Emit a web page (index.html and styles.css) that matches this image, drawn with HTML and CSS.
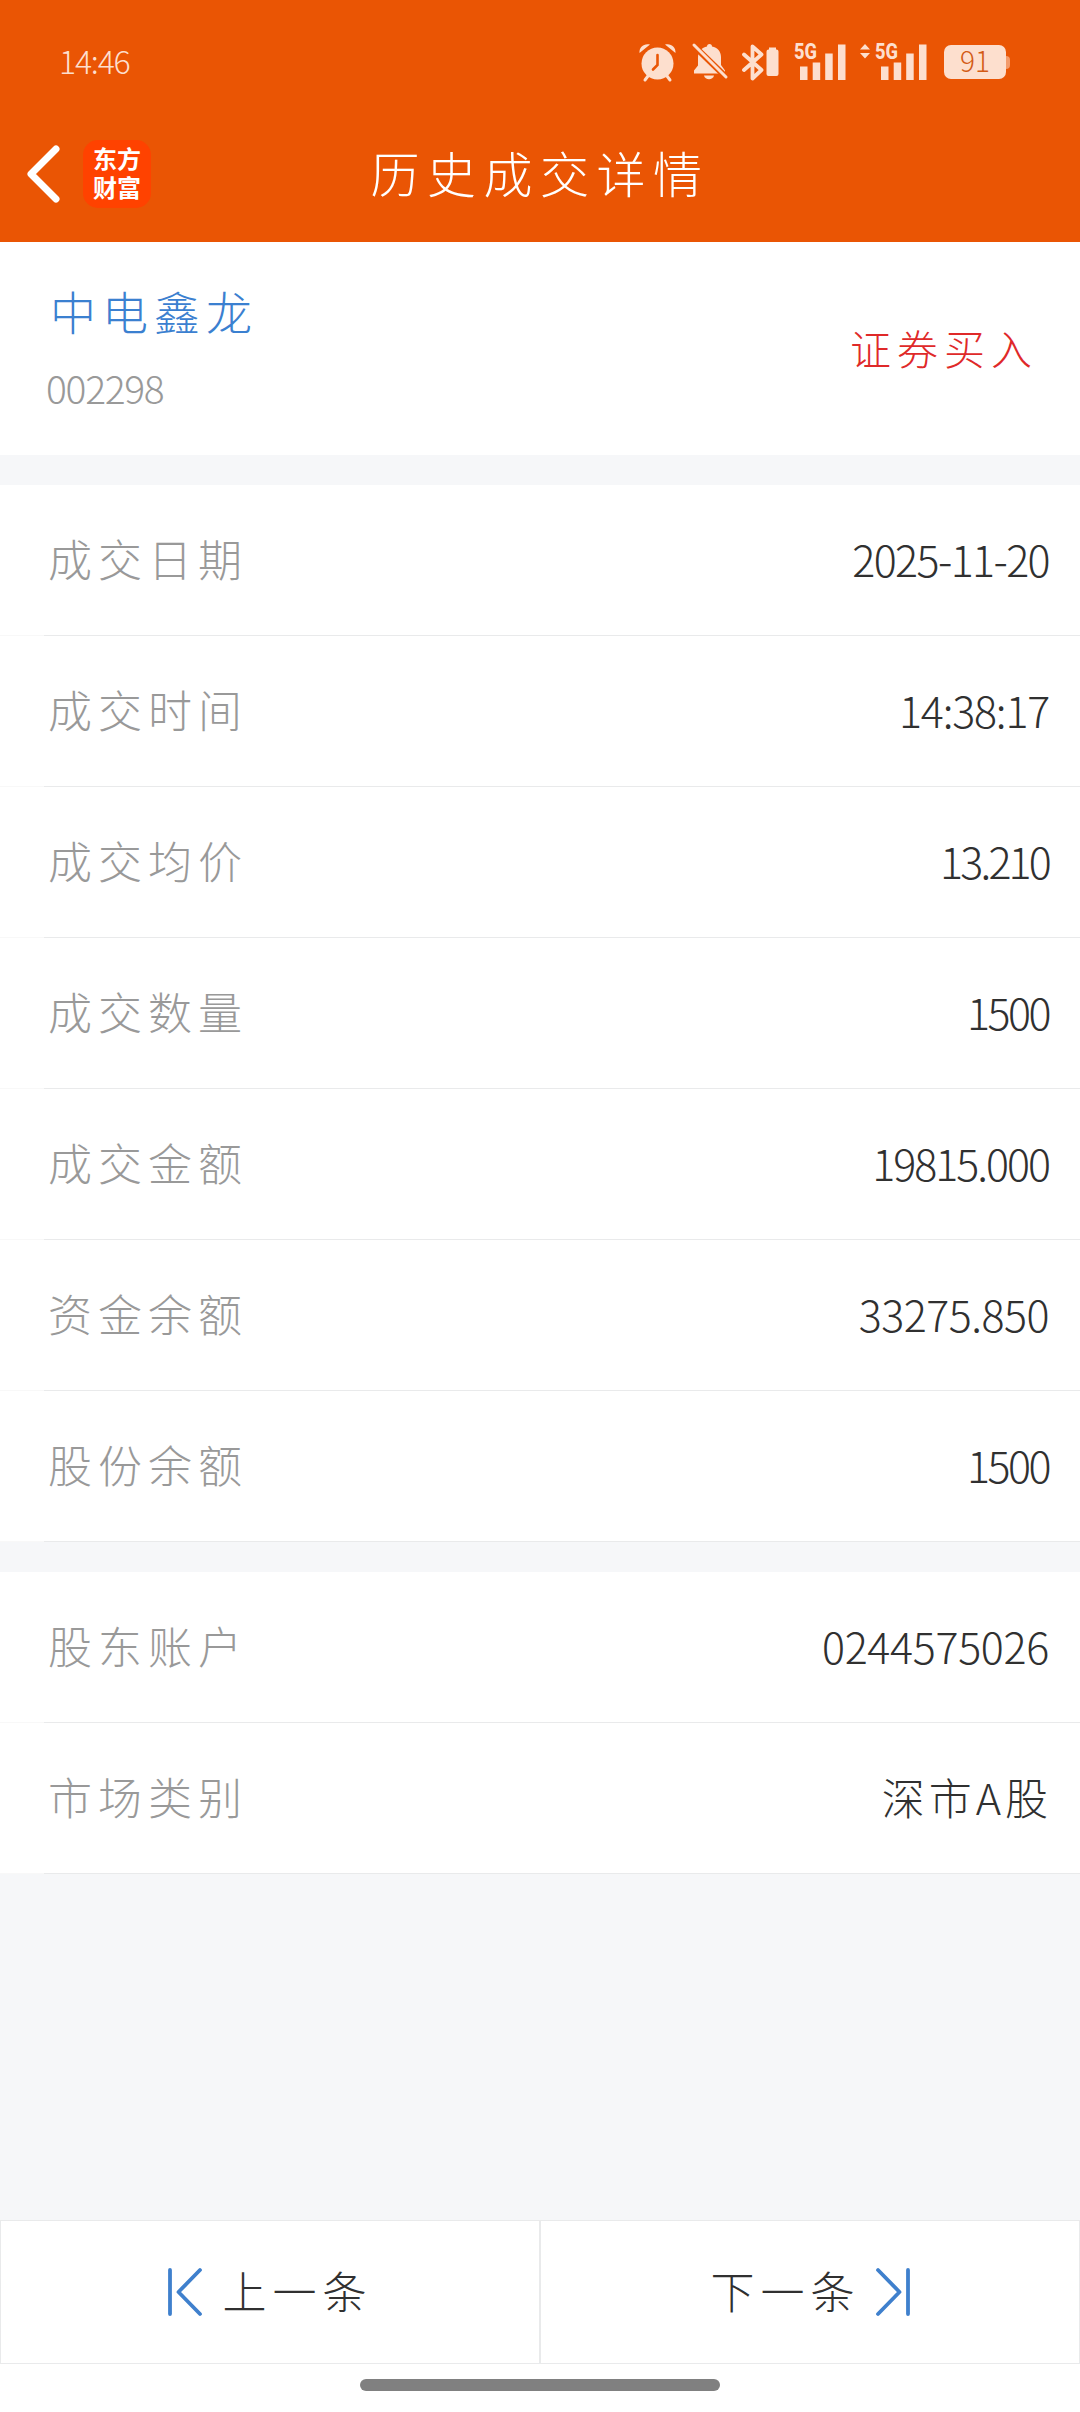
FILE: index.html
```html
<!DOCTYPE html>
<html lang="zh-CN">
<head>
<meta charset="utf-8">
<title>历史成交详情</title>
<link rel="stylesheet" href="styles.css">
</head>
<body>
<div class="screen">
  <header class="header">
    <div class="status">
      <span class="clock">14:46</span>
      <div class="status-icons">
        <svg class="ic-alarm" width="37" height="39" viewBox="0 0 37 39">
          <circle cx="18.5" cy="20.5" r="16" fill="currentColor"/>
          <path d="M0.5 10C0 4 5 0 11 1.5ZM36.500 10C37 4 32 0 26 1.500Z" fill="currentColor"/>
          <path d="M9 33l-3 4M28 33l3 4" stroke="currentColor" stroke-width="3" stroke-linecap="round"/>
          <path d="M18.500 12v10l-4.500 4.500" fill="none" stroke="#ea5504" stroke-width="2.600" stroke-linecap="round"/>
        </svg>
        <svg class="ic-bell" width="36" height="36" viewBox="0 0 36 36">
          <path d="M2 29.500v-3l4-5v-8C6 7 10 3.500 15 2.500a2.500 2.500 0 0 1 5 0C25.500 3.500 29 7.500 29 13v8l4 5.500v3Z" fill="currentColor"/>
          <path d="M12 31.500h10c-1 5-9 5-10 0Z" fill="currentColor"/>
          <path d="M1 1L35 34" stroke="#ea5504" stroke-width="6"/>
          <path d="M2 1L34 33" stroke="currentColor" stroke-width="3" stroke-linecap="round"/>
        </svg>
        <svg class="ic-bt" width="37" height="37" viewBox="0 0 37 37">
          <path d="M2 10.500l17.500 15.500-9 8.500V2.500l9 8L2 26" fill="none" stroke="currentColor" stroke-width="3.800" stroke-linejoin="round" stroke-linecap="round"/>
          <path d="M27 5.500V3.500h7v2h.500a2 2 0 0 1 2 2V30a2 2 0 0 1-2 2h-8a2 2 0 0 1-2-2V7.500a2 2 0 0 1 2-2Z" fill="currentColor"/>
        </svg>
        <svg class="ic-sim" width="52" height="38" viewBox="0 0 52 38">
          <text class="net" x="0" y="16" textLength="23" lengthAdjust="spacingAndGlyphs">5G</text>
          <path d="M6 23.500h7.500V37H6ZM18.700 19.500h7.500V37h-7.500ZM31.200 10.500h7.500V37h-7.500ZM44 1.500h7.500V37H44Z" fill="currentColor"/>
        </svg>
        <svg class="ic-sim2" width="67" height="38" viewBox="0 0 67 38">
          <path d="M0 6.500L5 1l5 5.500ZM0 10l5 5.500L10 10Z" fill="currentColor"/>
          <text class="net" x="15" y="16" textLength="23" lengthAdjust="spacingAndGlyphs">5G</text>
          <path d="M21 23.500h7.500V37H21ZM33.700 19.500h7.500V37h-7.500ZM46.200 10.500h7.500V37h-7.500ZM59 1.500h7.500V37H59Z" fill="currentColor"/>
        </svg>
        <div class="battery"><span class="cell">91</span><span class="tip"></span></div>
      </div>
    </div>
    <div class="navbar">
      <div class="nav-side">
        <svg width="34" height="58" viewBox="0 0 34 58"><path d="M31 4L6 29l25 25" fill="none" stroke="#fff" stroke-width="7" stroke-linecap="round" stroke-linejoin="round"/></svg>
        <div class="logo">东方<br>财富</div>
      </div>
      <h1 class="title">历史成交详情</h1>
      <div class="nav-side"></div>
    </div>
  </header>

  <section class="stock">
    <div class="stock-id">
      <div class="stock-name">中电鑫龙</div>
      <div class="stock-code">002298</div>
    </div>
    <div class="side-buy">证券买入</div>
  </section>

  <section class="group">
    <div class="row"><span class="label">成交日期</span><span class="value date">2025-11-20</span></div>
    <div class="row"><span class="label">成交时间</span><span class="value time">14:38:17</span></div>
    <div class="row"><span class="label">成交均价</span><span class="value price">13.210</span></div>
    <div class="row"><span class="label">成交数量</span><span class="value count">1500</span></div>
    <div class="row"><span class="label">成交金额</span><span class="value amount">19815.000</span></div>
    <div class="row"><span class="label">资金余额</span><span class="value balance">33275.850</span></div>
    <div class="row"><span class="label">股份余额</span><span class="value count">1500</span></div>
  </section>

  <section class="group">
    <div class="row"><span class="label">股东账户</span><span class="value account">0244575026</span></div>
    <div class="row"><span class="label">市场类别</span><span class="value market">深市A股</span></div>
  </section>

  <footer class="footer">
    <div class="pager">
      <div class="pager-button">
        <svg width="34" height="48" viewBox="0 0 34 48"><path d="M2 2v44M32 2L10.500 24 32 46" fill="none" stroke="currentColor" stroke-width="3.800" stroke-linecap="round" stroke-linejoin="round"/></svg>
        <span class="prev-text">上一条</span>
      </div>
      <div class="pager-button">
        <span class="next-text">下一条</span>
        <svg width="34" height="48" viewBox="0 0 34 48"><path d="M32 2v44M2 2l21.500 22L2 46" fill="none" stroke="currentColor" stroke-width="3.800" stroke-linecap="round" stroke-linejoin="round"/></svg>
      </div>
    </div>
    <div class="home-bar"></div>
  </footer>
</div>
</body>
</html>
```
FILE: styles.css
```css
* { box-sizing: border-box; }

body {
  margin: 0;
  background: #f6f7f9;
  font-family: "Noto Sans CJK SC", "Noto Sans", sans-serif;
  font-weight: 300;
  color: #303030;
}

svg { display: block; flex: none; overflow: visible; }

.screen {
  width: 1080px;
  height: 2412px;
  display: flex;
  flex-direction: column;
  background: #f6f7f9;
}

.header { height: 242px; background: #ea5504; color: #fddfce; }

.status {
  height: 106px;
  padding: 18px 70px 0 59px;
  display: flex;
  align-items: center;
  justify-content: space-between;
}

.clock { padding-bottom: 4px; font-size: 32px; line-height: 40px; letter-spacing: -1.200px; }

.status-icons { display: flex; align-items: center; }
.ic-bell { margin-left: 16px; }
.ic-bt { margin-left: 14px; }
.ic-sim { margin-left: 15px; }
.ic-sim2 { margin-left: 14px; }
.net { font: 800 22px Roboto, sans-serif; fill: currentColor; }

.battery { margin-left: 17px; display: flex; align-items: center; }
.cell {
  width: 62px;
  height: 34px;
  border-radius: 7px;
  background: #fddfce;
  color: #d35a14;
  font-size: 28px;
  line-height: 31px;
  text-align: center;
}
.tip { width: 4px; height: 13px; border-radius: 0 4px 4px 0; background: #f39b6b; }

.navbar {
  height: 136px;
  padding: 0 25px;
  display: flex;
  align-items: center;
}
.nav-side { flex: 1; display: flex; align-items: center; gap: 24px; }

.logo {
  width: 68px;
  height: 68px;
  padding: 3px 0 0 10px;
  border-radius: 15px;
  background: #ff4200;
  color: #fff;
  font-size: 24px;
  font-weight: 700;
  line-height: 29px;
}

.title {
  margin: 0;
  padding-bottom: 4px;
  font-size: 49px;
  font-weight: 300;
  letter-spacing: 7.500px;
  line-height: 70px;
  color: #fff;
}

.stock {
  height: 213px;
  padding: 0 42px 0 46px;
  display: flex;
  align-items: center;
  justify-content: space-between;
  background: #fff;
}
.stock-name {
  padding-left: 4px;
  font-size: 46px;
  line-height: 76px;
  letter-spacing: 6px;
  color: #3b80d0;
}
.stock-code { font-size: 39px; line-height: 78px; letter-spacing: -1.300px; color: #999; }
.side-buy { padding-bottom: 4px; font-size: 41px; letter-spacing: 6px; color: #df2929; }

.group { margin-top: 30px; background: #fff; }

.row {
  height: 151px;
  padding: 0 31px 4px 48px;
  display: flex;
  align-items: center;
  justify-content: space-between;
  border-bottom: 1px solid;
  border-image: linear-gradient(to right, #f8f8f8 45px, #e9eaeb 45px) 1;
}

.label { font-size: 44px; letter-spacing: 6px; color: #999; }
.value { font-size: 43px; }
.date { letter-spacing: -1.600px; }
.time { letter-spacing: -1.200px; }
.price { letter-spacing: -2.800px; }
.count { letter-spacing: -2.500px; }
.amount { letter-spacing: -2px; }
.balance { letter-spacing: -.5px; }
.account { letter-spacing: -.3px; }
.market { letter-spacing: 4px; margin-right: -3px; }

.footer { margin-top: auto; height: 192px; background: #fff; }

.pager { height: 144px; display: flex; }
.pager-button {
  flex: 1;
  display: flex;
  align-items: center;
  justify-content: center;
  border: 1px solid #e9eaeb;
  color: #3f80cd;
}
.pager-button span { padding-bottom: 4px; font-size: 44px; letter-spacing: 6px; color: #303030; }
.pager-button .prev-text { margin-left: 21px; }
.pager-button .next-text { margin-right: 15px; }

.home-bar {
  width: 360px;
  height: 12px;
  margin: 15px auto 0;
  border-radius: 6px;
  background: #808080;
}
```
